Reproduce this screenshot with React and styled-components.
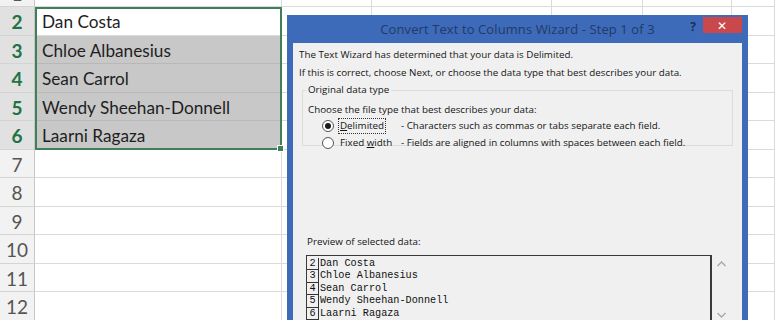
import React from 'react';
import styled, { createGlobalStyle } from 'styled-components';

const Global = createGlobalStyle`
  html, body { margin: 0; padding: 0; background: #fff; }
  * { box-sizing: border-box; }
`;

const Frame = styled.div`
  position: relative;
  width: 775px;
  height: 320px;
  overflow: hidden;
  background: #fff;
`;

const Sheet = styled.div`
  display: grid;
  grid-template-columns: 35px 247px 90px 180px 91px 89px 1fr;
  grid-auto-rows: 28.5px;
  margin-top: -21.5px;
  font-family: Lato, "Open Sans", sans-serif;
`;

const RowHead = styled.div`
  display: flex;
  align-items: center;
  justify-content: center;
  background: ${(p) => (p.$selected ? '#e1e1e1' : '#f2f2f2')};
  color: ${(p) => (p.$selected ? '#217346' : '#555')};
  font-weight: ${(p) => (p.$selected ? 700 : 400)};
  font-size: 19px;
  border-right: 1px solid #c6c6c6;
  border-bottom: 1px solid #d4d4d4;
  padding-top: 2px;
`;

const Cell = styled.div`
  display: flex;
  align-items: center;
  padding: 2px 0 0 7px;
  font-size: 17.2px;
  color: #1e1e1e;
  white-space: nowrap;
  overflow: hidden;
  font-weight: ${(p) => (p.$bold ? 700 : 400)};
  background: ${(p) => (p.$selected ? '#c8c8c8' : '#fff')};
  border-right: 1px solid #dadada;
  border-bottom: 1px solid ${(p) => (p.$selected ? '#b8b8b8' : '#dadada')};
`;

const Selection = styled.div`
  position: absolute;
  left: 35px;
  top: 7px;
  width: 247px;
  height: 143px;
  border: 2px solid #3f8059;
  pointer-events: none;

  &::after {
    content: '';
    position: absolute;
    right: -4px;
    bottom: -4px;
    width: 5px;
    height: 5px;
    background: #3f8059;
    border: 1px solid #fff;
  }
`;

const Dialog = styled.div`
  position: absolute;
  left: 287px;
  top: 15px;
  width: 461px;
  height: 340px;
  display: flex;
  flex-direction: column;
  background: #3d6bb9;
  padding: 0 6px;
  font-family: "Open Sans", "Noto Sans", sans-serif;
`;

const TitleBar = styled.div`
  position: relative;
  height: 28px;
  display: flex;
  align-items: center;
  justify-content: center;
  color: #233a66;
  font-size: 13px;
  letter-spacing: 0.1px;
`;

const TitleControls = styled.div`
  position: absolute;
  right: 0;
  top: 2px;
  display: flex;
  align-items: flex-start;
  gap: 7px;
`;

const Help = styled.span`
  color: #1d2f55;
  font-weight: 700;
  font-size: 12px;
  line-height: 14px;
  margin-top: 3px;
`;

const CloseButton = styled.div`
  width: 39px;
  height: 16px;
  background: #c9484b;
  color: #fff;
  display: flex;
  align-items: center;
  justify-content: center;
  font-size: 12px;
`;

const Body = styled.div`
  flex: 1;
  background: #f0f0f0;
  padding: 3px 6px 0 6px;
  font-size: 9.8px;
  color: #141414;
`;

const Line = styled.div`
  height: ${(p) => p.$h || 18}px;
  line-height: ${(p) => p.$h || 18}px;
  white-space: nowrap;
`;

const Group = styled.fieldset`
  margin: 0 3px 0 3px;
  padding: 4px 0 4px 5px;
  border: 1px solid #dcdcdc;
  height: 64px;

  legend {
    padding: 0 2px;
    margin-left: -2px;
    line-height: 16px;
  }
`;

const OptionRow = styled.div`
  display: grid;
  grid-template-columns: 16px 63px 1fr;
  align-items: center;
  height: 17px;
  padding-left: 14px;
  white-space: nowrap;
`;

const Radio = styled.span`
  width: 12px;
  height: 12px;
  border-radius: 50%;
  border: 1px solid #555;
  background: #fff;
  display: flex;
  align-items: center;
  justify-content: center;

  &::after {
    content: '';
    width: 6px;
    height: 6px;
    border-radius: 50%;
    background: ${(p) => (p.$checked ? '#1a1a1a' : 'transparent')};
  }
`;

const OptionLabel = styled.span`
  justify-self: start;
  padding: 0 1px;
  line-height: 14px;
  border: 1px dotted ${(p) => (p.$focused ? '#333' : 'transparent')};
`;

const PreviewLabel = styled.div`
  margin: 88px 0 0 8px;
  height: 16px;
  line-height: 16px;
`;

const PreviewRow = styled.div`
  display: flex;
  align-items: flex-start;
  margin: 5px 0 0 7px;
  gap: 4px;
`;

const PreviewBox = styled.div`
  width: 406px;
  height: 80px;
  border: 1px solid #3a3a3a;
  border-right-width: 2px;
  padding-top: 2px;
  font-family: "Liberation Mono", monospace;
  font-size: 10.2px;
  color: #111;
`;

const DataRow = styled.div`
  display: flex;
  height: 12.4px;
  line-height: 12.4px;
  white-space: nowrap;
`;

const Num = styled.span`
  width: 12px;
  text-align: center;
  border-right: 1px solid #333;
  border-bottom: 1px solid #333;
  margin-right: 1px;
`;

const Scroll = styled.div`
  display: flex;
  flex-direction: column;
  justify-content: space-between;
  height: 64px;
  padding-top: 5px;
`;

const Chevron = ({ up }) => (
  <svg width="11" height="7" viewBox="0 0 11 7">
    <path
      d={up ? 'M1.5 6L5.5 2L9.5 6' : 'M1.5 1L5.5 5L9.5 1'}
      fill="none"
      stroke="#a8a8a8"
      strokeWidth="1.4"
    />
  </svg>
);

const names = ['Dan Costa', 'Chloe Albanesius', 'Sean Carrol', 'Wendy Sheehan-Donnell', 'Laarni Ragaza'];

export default function App() {
  const rows = [];
  rows.push(
    <React.Fragment key="r1">
      <RowHead>1</RowHead>
      <Cell $bold>Names</Cell>
      <Cell $bold>First</Cell>
      <Cell $bold>Last</Cell>
      <Cell />
      <Cell />
      <Cell />
    </React.Fragment>
  );
  for (let r = 2; r <= 12; r++) {
    const sel = r >= 2 && r <= 6;
    rows.push(
      <React.Fragment key={r}>
        <RowHead $selected={sel}>{r}</RowHead>
        <Cell $selected={r >= 3 && r <= 6}>{sel ? names[r - 2] : ''}</Cell>
        <Cell />
        <Cell />
        <Cell />
        <Cell />
        <Cell />
      </React.Fragment>
    );
  }

  return (
    <Frame>
      <Global />
      <Sheet>{rows}</Sheet>
      <Selection />
      <Dialog>
        <TitleBar>
          Convert Text to Columns Wizard - Step 1 of 3
          <TitleControls>
            <Help>?</Help>
            <CloseButton>✕</CloseButton>
          </TitleControls>
        </TitleBar>
        <Body>
          <Line>The Text Wizard has determined that your data is Delimited.</Line>
          <Line>If this is correct, choose Next, or choose the data type that best describes your data.</Line>
          <Group>
            <legend>Original data type</legend>
            <Line $h={15}>Choose the file type that best describes your data:</Line>
            <OptionRow>
              <Radio $checked />
              <OptionLabel $focused><u>D</u>elimited</OptionLabel>
              <span>- Characters such as commas or tabs separate each field.</span>
            </OptionRow>
            <OptionRow>
              <Radio />
              <OptionLabel>Fixed <u>w</u>idth</OptionLabel>
              <span>- Fields are aligned in columns with spaces between each field.</span>
            </OptionRow>
          </Group>
          <PreviewLabel>Preview of selected data:</PreviewLabel>
          <PreviewRow>
            <PreviewBox>
              {names.map((n, i) => (
                <DataRow key={n}>
                  <Num>{i + 2}</Num>
                  {n}
                </DataRow>
              ))}
            </PreviewBox>
            <Scroll>
              <Chevron up />
              <Chevron />
            </Scroll>
          </PreviewRow>
        </Body>
      </Dialog>
    </Frame>
  );
}
